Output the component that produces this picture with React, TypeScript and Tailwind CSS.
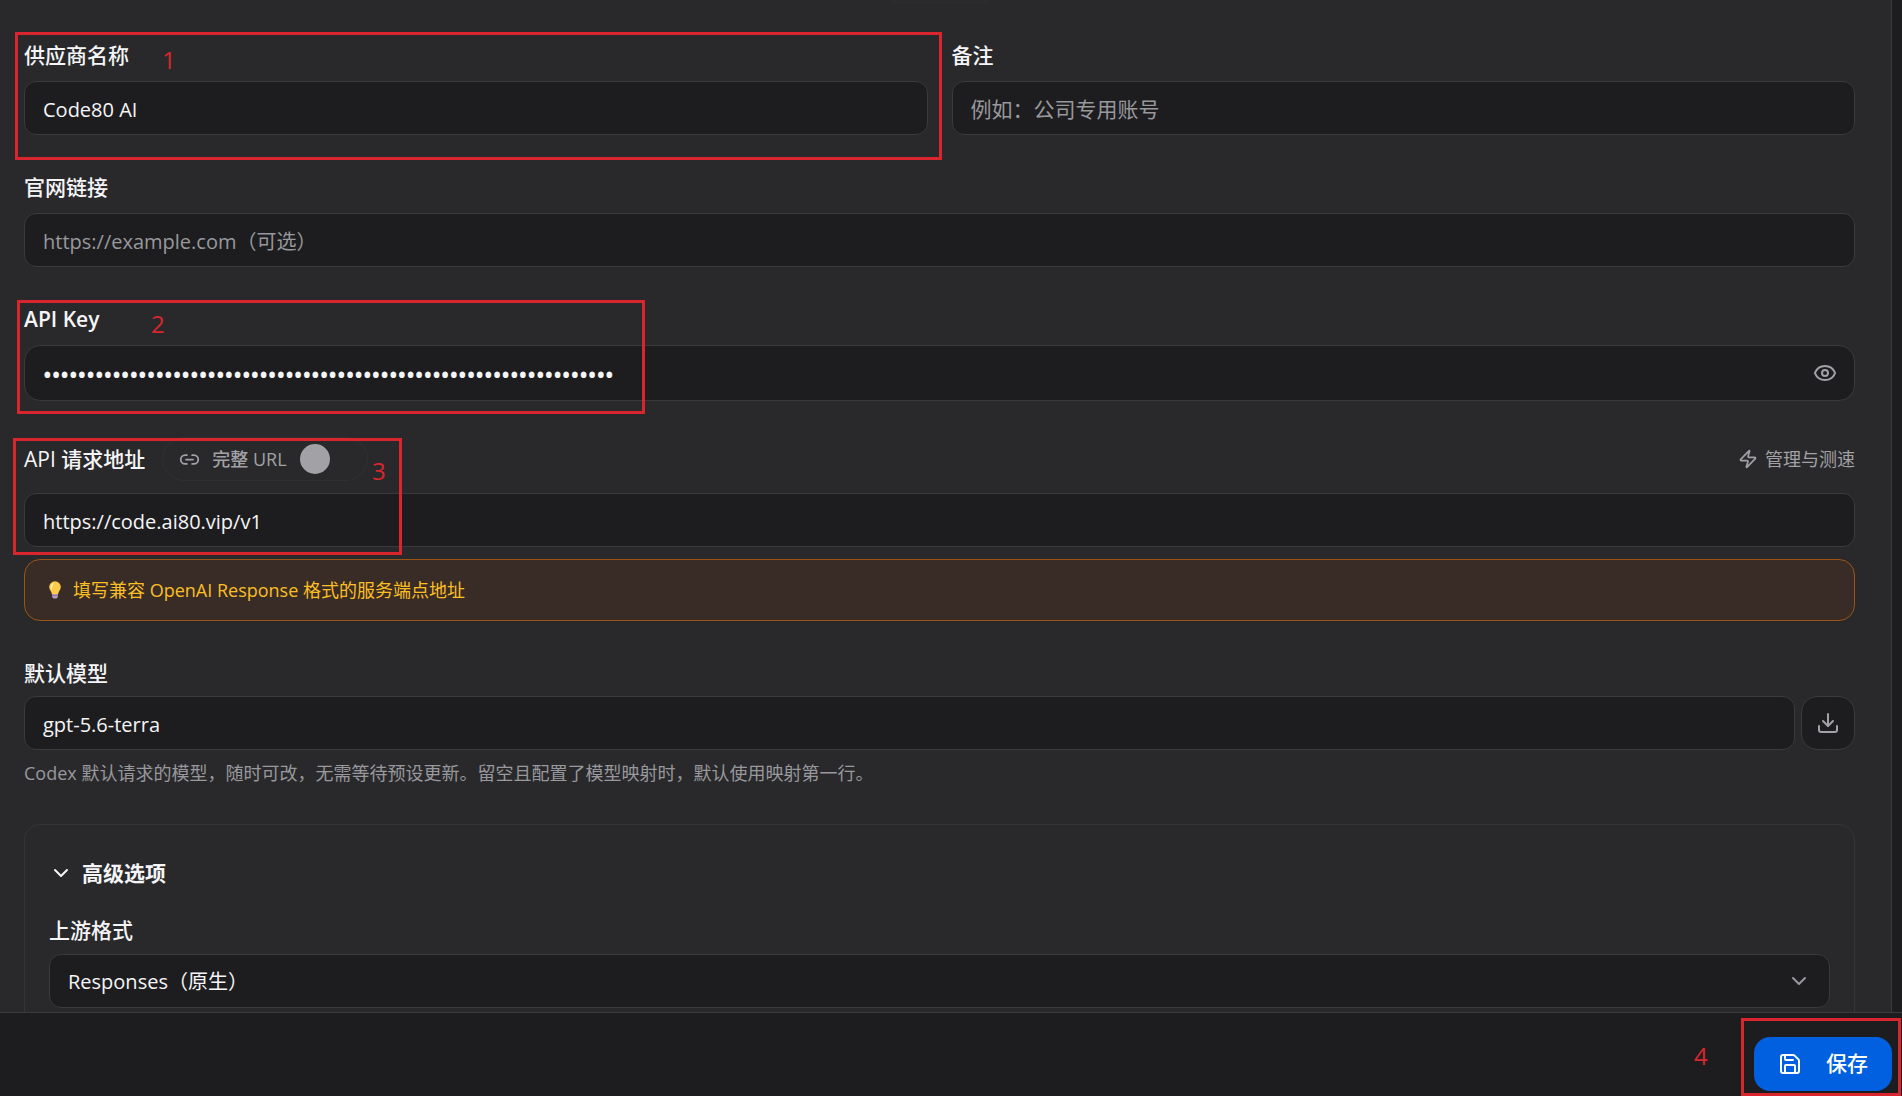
import { useState } from "react"
import type { ReactNode } from "react"
import { ChevronDown, Download, Eye, EyeOff, Link2, Save, Zap } from "lucide-react"
import clsx from "clsx"

const inputClass =
  "block h-[54px] w-full rounded-xl border border-[#3a3a3d] bg-[#1d1d1f] px-[18px] pt-[2px] text-[20px] text-[#f5f5f7] outline-none placeholder:text-[#98989d] placeholder:opacity-100"

const labelClass = "block text-[21px] leading-[26px] font-medium text-[#f5f5f7]"

// Numbered red frame that points at one step of the setup guide
function Step({ n, frame, mark }: { n: number; frame: string; mark: string }) {
  return (
    <>
      <span className={clsx("pointer-events-none absolute border-3 border-[#d9262e]", frame)} />
      <span className={clsx("pointer-events-none absolute text-[24px] leading-6 text-[#d9262e]", mark)}>{n}</span>
    </>
  )
}

function Field({ id, label, bold, children }: { id: string; label: string; bold?: boolean; children: ReactNode }) {
  return (
    <div className="relative flex flex-col gap-[13px]">
      <label htmlFor={id} className={clsx(labelClass, bold && "font-semibold")}>{label}</label>
      {children}
    </div>
  )
}

export default function App() {
  const [name, setName] = useState("Code80 AI")
  const [apiKey, setApiKey] = useState("k".repeat(66))
  const [showKey, setShowKey] = useState(false)
  const [baseUrl, setBaseUrl] = useState("https://code.ai80.vip/v1")
  const [fullUrl, setFullUrl] = useState(false)
  const [model, setModel] = useState("gpt-5.6-terra")
  const [open, setOpen] = useState(true)

  return (
    <form
      onSubmit={(e) => e.preventDefault()}
      className="flex h-screen flex-col overflow-hidden bg-[#1d1d1f] font-['Open_Sans','Noto_Sans_CJK_SC',sans-serif] text-[#f5f5f7]"
    >
      <main className="mr-[10px] min-h-0 flex-1 overflow-y-auto border-r border-[#3a3a3d] bg-[#29292b] pr-9 pl-6 [scrollbar-width:none]">
        <div className="mx-auto h-1 w-[100px] rounded-b-md bg-[#2b2b2d]" />
        <div className="mt-[38px] grid grid-cols-2 gap-6">
          <Field id="name" label="供应商名称">
            <input id="name" value={name} onChange={(e) => setName(e.target.value)} className={inputClass} />
            <Step n={1} frame="-top-[10px] -right-[14px] -bottom-[25px] -left-[9px]" mark="top-[6px] left-[138px]" />
          </Field>
          <Field id="remark" label="备注">
            <input id="remark" placeholder="例如：公司专用账号" className={clsx(inputClass, "text-[21px]")} />
          </Field>
        </div>

        <div className="mt-[39px]">
          <Field id="website" label="官网链接">
            <input id="website" placeholder="https://example.com（可选）" className={inputClass} />
          </Field>
        </div>

        <div className="mt-[39px]">
          <Field id="key" label="API Key" bold>
            <div className="flex h-14 items-center rounded-2xl border border-[#3a3a3d] bg-[#1d1d1f] pr-[17px] pl-[18px]">
              <input
                id="key"
                type={showKey ? "text" : "password"}
                value={apiKey}
                onChange={(e) => setApiKey(e.target.value)}
                className="min-w-0 flex-1 bg-transparent pt-[2px] text-[23px] font-semibold outline-none"
              />
              <button type="button" aria-label="显示 API Key" onClick={() => setShowKey(!showKey)} className="text-[#a1a1a6]">
                {showKey ? <EyeOff size={24} /> : <Eye size={24} />}
              </button>
            </div>
            <Step n={2} frame="-top-[6px] -left-[7px] h-[114px] w-[628px]" mark="top-[6px] left-[127px]" />
          </Field>
        </div>

        <div className="relative mt-9">
          <div className="flex items-center justify-between">
            <div className="flex items-center gap-[17px]">
              <label htmlFor="url" className={labelClass}>API 请求地址</label>
              <label className="flex h-11 items-center gap-3 rounded-full border border-[#303033] px-4 text-[18px] font-medium text-[#a1a1a6]">
                <Link2 size={21} />
                完整 URL
                <input
                  type="checkbox"
                  role="switch"
                  checked={fullUrl}
                  onChange={(e) => setFullUrl(e.target.checked)}
                  className="h-9 w-[52px] appearance-none rounded-full px-px py-[3px] before:block before:size-[30px] before:rounded-full before:bg-[#a1a1a6] checked:bg-[#0060e0] checked:before:ml-auto"
                />
              </label>
            </div>
            <button type="button" className="flex items-center gap-[7px] text-[18px] text-[#a1a1a6]">
              <Zap size={20} />
              管理与测速
            </button>
          </div>
          <input id="url" value={baseUrl} onChange={(e) => setBaseUrl(e.target.value)} className={clsx(inputClass, "mt-3")} />
          <Step n={3} frame="top-px -left-[11px] h-[117px] w-[389px]" mark="top-[22px] left-[348px]" />
        </div>

        <p className="mt-3 flex h-[62px] items-center rounded-2xl border border-[#9a5516] bg-[#392c26] px-5 text-[18px] text-[#fbbf24]">
          <svg viewBox="0 0 24 24" className="mr-2 size-5" aria-hidden="true">
            <path d="M12 1.5a7 7 0 0 0-7 7c0 3.3 2.6 5 3.3 8.3h7.4C16.4 13.5 19 11.8 19 8.5a7 7 0 0 0-7-7z" fill="#fcc94a" />
            <path d="M11 3.5c-2.6.3-4.2 2.3-4.2 4.7 0 1.5.7 2.6 1.5 3.9C8.5 8.5 9 5.5 11 3.5z" fill="#fff0b0" />
            <path d="M8.5 16.8h7V20L14 22.2h-4L8.5 20z" fill="#b49cc0" />
            <path d="M8.5 18.7h7" stroke="#7d6a8c" strokeWidth="1" />
          </svg>
          填写兼容 OpenAI Response 格式的服务端点地址
        </p>

        <div className="mt-[39px]">
          <label htmlFor="model" className={labelClass}>默认模型</label>
          <div className="mt-[10px] flex gap-[6px]">
            <input id="model" value={model} onChange={(e) => setModel(e.target.value)} className={inputClass} />
            <button
              type="button"
              aria-label="获取模型列表"
              className="flex size-[54px] shrink-0 items-center justify-center rounded-2xl border border-[#3a3a3d] bg-[#1d1d1f] text-[#a1a1a6]"
            >
              <Download size={24} />
            </button>
          </div>
          <p className="mt-[11px] text-[18px] leading-6 text-[#98989d]">
            Codex 默认请求的模型，随时可改，无需等待预设更新。留空且配置了模型映射时，默认使用映射第一行。
          </p>
        </div>

        <section className="mt-[39px] rounded-2xl border border-[#353538] px-6 pt-[35px] pb-9">
          <button type="button" aria-expanded={open} onClick={() => setOpen(!open)} className="flex items-center gap-[9px] text-[21px] leading-[26px] font-bold">
            <ChevronDown size={24} className={clsx(!open && "-rotate-90")} />
            高级选项
          </button>
          {open && (
            <div className="mt-[31px]">
              <label htmlFor="format" className={labelClass}>上游格式</label>
              <div className="relative mt-[11px]">
                <select id="format" className={clsx(inputClass, "appearance-none")}>
                  <option>Responses（原生）</option>
                </select>
                <ChevronDown size={24} className="pointer-events-none absolute top-[15px] right-[19px] text-[#98989d]" />
              </div>
            </div>
          )}
        </section>
      </main>

      <footer className="flex h-[84px] shrink-0 items-center justify-end border-t border-[#3a3a3d] pt-[18px] pr-[10px]">
        <div className="relative">
          <button className="flex h-[54px] w-[138px] items-center justify-center gap-6 rounded-2xl bg-[#0060e0] text-[21px] font-medium text-white">
            <Save size={24} />
            保存
          </button>
          <Step n={4} frame="-top-[19px] -right-[9px] -bottom-[5px] -left-[13px]" mark="top-[7px] -left-[60px]" />
        </div>
      </footer>
    </form>
  )
}
